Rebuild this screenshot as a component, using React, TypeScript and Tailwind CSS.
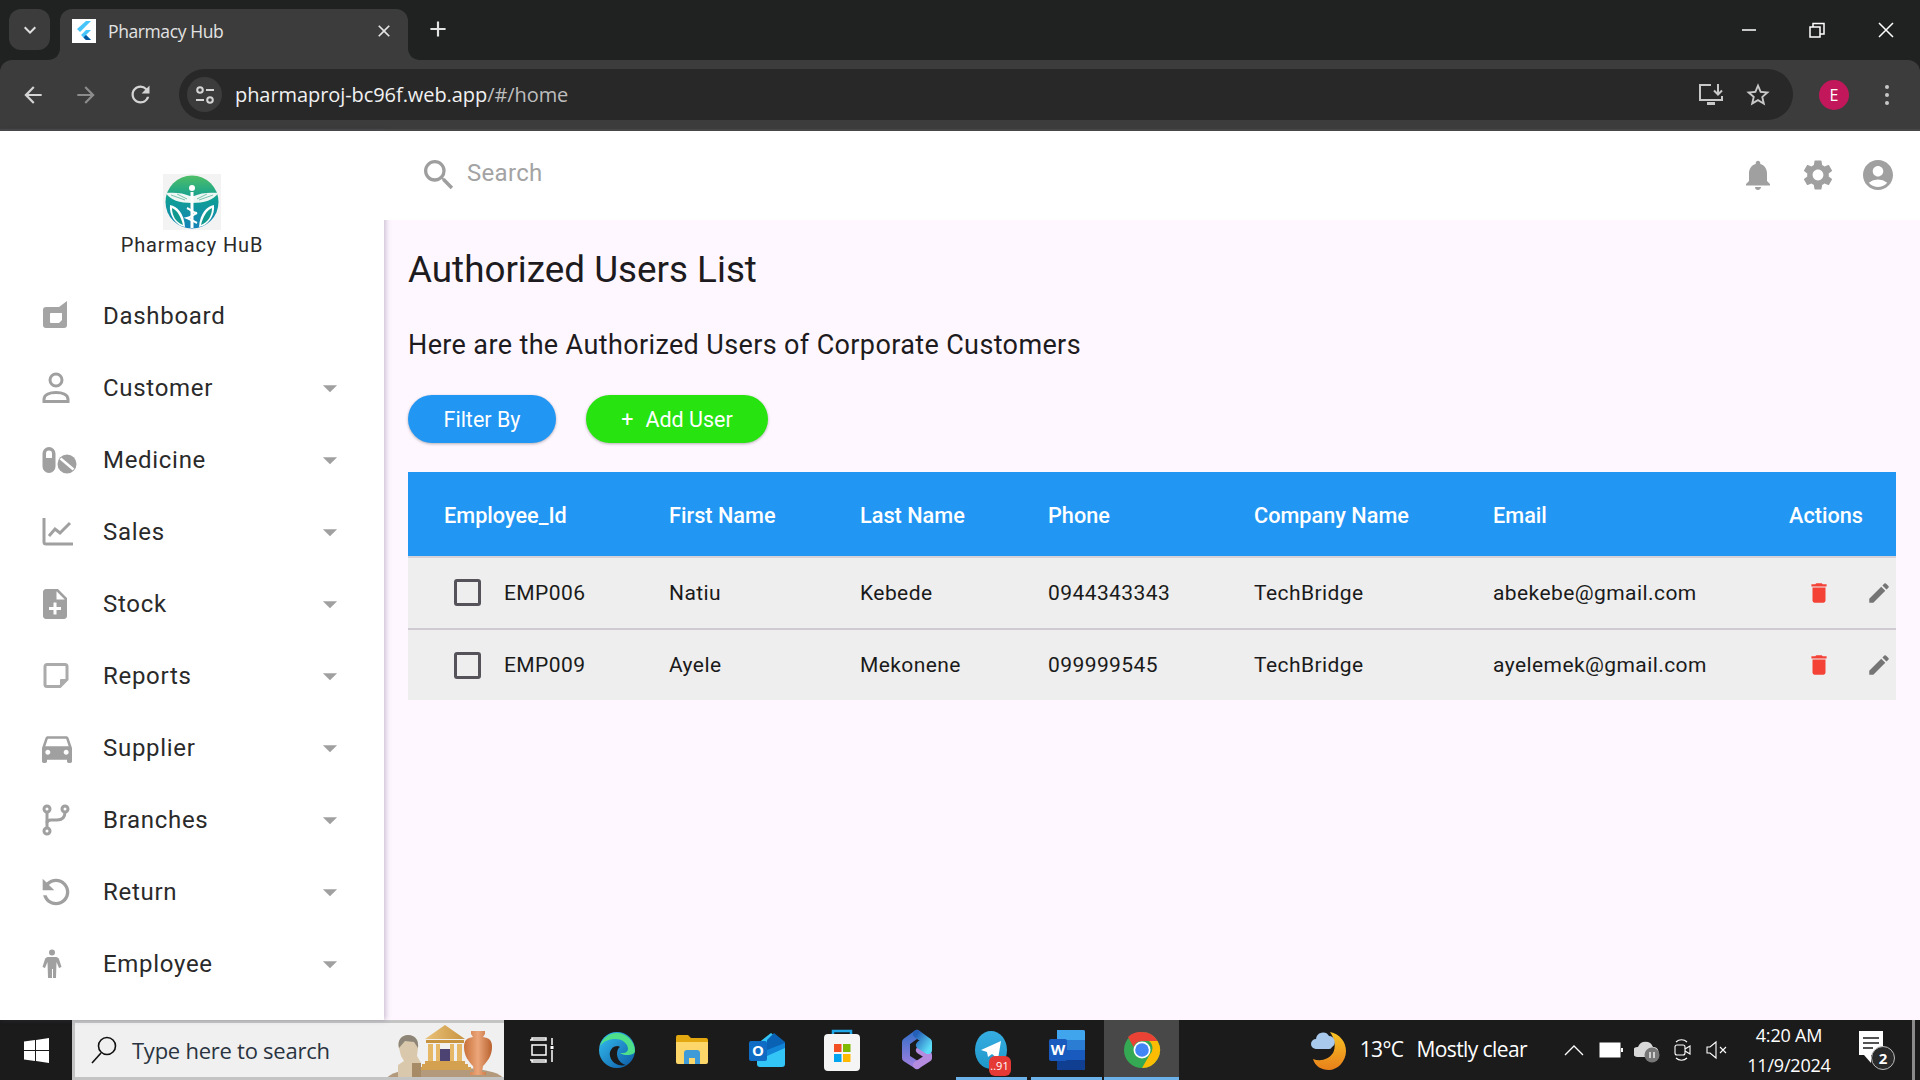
import React from "react";
import {
  MdArrowBack,
  MdArrowForward,
  MdRefresh,
  MdStarBorder,
  MdSearch,
  MdNotifications,
  MdSettings,
  MdAccountCircle,
  MdArrowDropDown,
  MdDelete,
  MdEdit,
  MdDirectionsCar,
  MdNoteAdd,
  MdClose,
  MdAdd,
  MdKeyboardArrowDown,
} from "react-icons/md";

const DashboardIcon = () => (
  <svg width="26" height="30" viewBox="0 0 26 30" fill="#a4a4a4">
    <path
      fillRule="evenodd"
      d="M4 6h13l8-6v24a3 3 0 0 1-3 3H4a3 3 0 0 1-3-3V9a3 3 0 0 1 3-3zm5 6a1 1 0 0 0-1 1v8a1 1 0 0 0 1 1h8l3-3v-7H9z"
    />
  </svg>
);

const CustomerIcon = () => (
  <svg width="28" height="32" viewBox="0 0 28 32" fill="none" stroke="#a0a0a0" strokeWidth="3">
    <circle cx="14" cy="8" r="6" />
    <path d="M2 29.500v-2c0-5 6-7 12-7s12 2 12 7v2z" />
  </svg>
);

const MedicineIcon = () => (
  <svg width="36" height="28" viewBox="0 0 36 28" fill="#a0a0a0">
    <path
      fillRule="evenodd"
      d="M7 1a6.500 6.500 0 0 1 6.500 6.500v13a6.500 6.500 0 0 1-13 0v-13A6.500 6.500 0 0 1 7 1zM4 12h6V7.500a3 3 0 0 0-6 0z"
    />
    <circle cx="25" cy="18" r="9.500" />
    <path d="M18.500 12.500l13 11" stroke="#fff" strokeWidth="2.500" />
  </svg>
);

const SalesIcon = () => (
  <svg width="32" height="30" viewBox="0 0 32 30" fill="none" stroke="#a0a0a0" strokeWidth="3">
    <path d="M2 1v24a2 2 0 0 0 2 2h27" />
    <path d="M7 19l6-7 5 4 10-10" />
  </svg>
);

const ReportsIcon = () => (
  <svg width="28" height="30" viewBox="0 0 28 30" fill="none" stroke="#ababab" strokeWidth="3">
    <path d="M5 3.500h18a2 2 0 0 1 2 2v13l-7 7H5a2 2 0 0 1-2-2v-18a2 2 0 0 1 2-2z" />
    <path d="M18 26v-7a1 1 0 0 1 1-1h7z" fill="#ababab" stroke="none" />
  </svg>
);

const BranchesIcon = () => (
  <svg width="28" height="32" viewBox="0 0 28 32" fill="none" stroke="#a0a0a0" strokeWidth="3">
    <circle cx="5" cy="5" r="3" />
    <circle cx="5" cy="27" r="3" />
    <circle cx="23" cy="5" r="3" />
    <path d="M5 8v16" />
    <path d="M23 8c0 6-3 8-8 8H9c-2 0-4 1-4 3" />
  </svg>
);

const EmployeeIcon = () => (
  <svg width="20" height="30" viewBox="0 0 20 30" fill="#a0a0a0">
    <circle cx="10" cy="3.500" r="3" />
    <path d="M6 8h8c1.500 0 2.500 1 3 2l2.500 8-2.500 1-2.500-6-.5 16h-3v-9h-1v9H6l-.5-16-2.500 6-2.500-1 2.500-8c.5-1 1.500-2 3-2z" />
  </svg>
);

const Logo = () => (
  <svg width="58" height="56" viewBox="0 0 58 56" className="bg-[#f3f3f3]">
    <defs>
      <linearGradient id="logoGrad" x1="0" y1="0" x2="0" y2="1">
        <stop offset="0" stopColor="#4fbf67" />
        <stop offset="0.45" stopColor="#0f9e95" />
        <stop offset="1" stopColor="#1382b8" />
      </linearGradient>
    </defs>
    <circle cx="29" cy="28" r="26.500" fill="url(#logoGrad)" />
    <path d="M3 19c8-1 18 0 24 3h4c6-3 15-4 24-3-4 7-14 10-26 10S7 26 3 19z" fill="#eef7f3" />
    <path d="M8 21l14 5M14 20l10 5M50 21l-14 5M44 20l-10 5" stroke="#7cc4b0" strokeWidth="1" />
    <circle cx="29" cy="14" r="3" fill="#fff" />
    <path d="M7 31c7 1 14 8 15 22C12 51 6 41 7 31z" fill="#fff" />
    <path d="M51 31c-7 1-14 8-15 22 10-2 16-12 15-22z" fill="#fff" />
    <path d="M9 34c6 3 9 9 11 17-7-3-11-9-11-17zM49 34c-6 3-9 9-11 17 7-3 11-9 11-17z" fill="#11998f" />
    <path d="M29 18v36" stroke="#fff" strokeWidth="3" />
    <path d="M24 34c6 3 6 5 10 5-5 2-5 4-10 5 5 2 6 3 10 5" fill="none" stroke="#fff" strokeWidth="2" />
  </svg>
);

const Favicon = () => (
  <div className="w-6 h-[24px] bg-white flex items-center justify-center">
    <svg width="16" height="20" viewBox="0 0 16 20">
      <path d="M10 0h5L4 11 1 8z" fill="#47c5fb" />
      <path d="M10 9h5l-5 5 5 5h-5l-5-5z" fill="#47c5fb" />
      <path d="M7.500 16.500L10 14l5 5h-5z" fill="#00569e" />
    </svg>
  </div>
);

const TuneIcon = () => (
  <svg width="22" height="22" viewBox="0 0 22 22" fill="none" stroke="#d5d5d5" strokeWidth="2">
    <circle cx="6" cy="6" r="2.800" />
    <path d="M12 6h8" />
    <circle cx="16" cy="16" r="2.800" />
    <path d="M2 16h8" />
  </svg>
);

const InstallIcon = () => (
  <svg width="26" height="24" viewBox="0 0 26 24" fill="none" stroke="#c8c8c8" strokeWidth="2">
    <path d="M13 2H2v15h22v-4" />
    <path d="M20 1v10M16 7.500l4 4 4-4" />
    <path d="M9 20.500h8" strokeWidth="3" />
  </svg>
);

const WindowControls = () => (
  <div className="flex items-center h-full">
    <div className="w-[68px] flex justify-center">
      <svg width="16" height="16" viewBox="0 0 16 16" stroke="#fff" strokeWidth="1.500"><path d="M1 8h14" /></svg>
    </div>
    <div className="w-[68px] flex justify-center">
      <svg width="16" height="16" viewBox="0 0 16 16" fill="none" stroke="#fff" strokeWidth="1.500">
        <path d="M1 5h10v10H1z" />
        <path d="M4 5V1.500h11V12h-4" />
      </svg>
    </div>
    <div className="w-[69px] flex justify-center">
      <svg width="16" height="16" viewBox="0 0 16 16" stroke="#fff" strokeWidth="1.500"><path d="M1 1l14 14M15 1L1 15" /></svg>
    </div>
  </div>
);

const BrowserChrome = () => (
  <div className="bg-[#202221] font-['Open_Sans',sans-serif]">
    <div className="h-[60px] flex items-end pl-[9px]">
      <div className="w-[41px] h-[41px] mb-[10px] rounded-xl bg-[#3c3c3c] flex items-center justify-center text-[#e0e0e0]">
        <MdKeyboardArrowDown size={24} />
      </div>
      <div className="relative ml-[10px] w-[348px] h-[51px] bg-[#3c3c3c] rounded-t-xl flex items-center pl-[12px] pr-[14px] pb-[7px]">
        <svg className="absolute -left-[12px] bottom-0" width="12" height="12" viewBox="0 0 12 12" fill="#3c3c3c">
          <path d="M12 0v12H0c7 0 12-5 12-12z" />
        </svg>
        <svg className="absolute -right-[12px] bottom-0" width="12" height="12" viewBox="0 0 12 12" fill="#3c3c3c">
          <path d="M0 0v12h12C5 12 0 7 0 0z" />
        </svg>
        <Favicon />
        <span className="ml-3 text-[#e3e3e3] text-[17.500px] tracking-[-0.4px]">Pharmacy Hub</span>
        <MdClose size={20} className="ml-auto text-[#e3e3e3]" />
      </div>
      <MdAdd size={26} className="ml-[17px] mb-[18px] text-[#e3e3e3]" />
      <div className="flex-1" />
      <WindowControls />
    </div>
    <div className="h-[71px] bg-[#3c3c3c] rounded-t-xl border-b-2 border-[#474747] flex items-center pl-[20px] pr-[20px]">
      <MdArrowBack size={26} className="text-[#d4d4d4]" />
      <MdArrowForward size={26} className="ml-[27px] text-[#8c8c8c]" />
      <MdRefresh size={27} className="ml-[28px] text-[#d4d4d4]" />
      <div className="ml-[25px] h-[51px] w-[1614px] rounded-full bg-[#282828] flex items-center pl-[8px] pr-[21px]">
        <div className="w-[35px] h-[35px] rounded-full bg-[#3c3c3c] flex items-center justify-center">
          <TuneIcon />
        </div>
        <span className="ml-[13px] text-[20px] tracking-[-0.07px] text-[#f1f1f1]">
          pharmaproj-bc96f.web.app<span className="text-[#bdbdbd]">/#/home</span>
        </span>
        <div className="ml-auto flex items-center gap-[20px]">
          <InstallIcon />
          <MdStarBorder size={28} className="text-[#c8c8c8]" />
        </div>
      </div>
      <div className="ml-[26px] w-[30px] h-[30px] rounded-full bg-[#c2185b] text-white text-[16px] flex items-center justify-center">
        E
      </div>
      <div className="ml-[36px] flex flex-col gap-[4px]">
        <div className="w-[4px] h-[4px] rounded-full bg-[#c8c8c8]" />
        <div className="w-[4px] h-[4px] rounded-full bg-[#c8c8c8]" />
        <div className="w-[4px] h-[4px] rounded-full bg-[#c8c8c8]" />
      </div>
    </div>
  </div>
);

const navItems: { label: string; icon: React.ReactNode; arrow: boolean }[] = [
  { label: "Dashboard", icon: <DashboardIcon />, arrow: false },
  { label: "Customer", icon: <CustomerIcon />, arrow: true },
  { label: "Medicine", icon: <MedicineIcon />, arrow: true },
  { label: "Sales", icon: <SalesIcon />, arrow: true },
  { label: "Stock", icon: <MdNoteAdd size={36} className="-ml-[5px] text-[#a0a0a0]" />, arrow: true },
  { label: "Reports", icon: <ReportsIcon />, arrow: true },
  { label: "Supplier", icon: <MdDirectionsCar size={40} className="-ml-[5px] text-[#a0a0a0]" />, arrow: true },
  { label: "Branches", icon: <BranchesIcon />, arrow: true },
  { label: "Return", icon: <MdRefresh size={40} className="-ml-[6px] -scale-x-100 text-[#a0a0a0]" />, arrow: true },
  { label: "Employee", icon: <EmployeeIcon />, arrow: true },
];

const Sidebar = () => (
  <div className="relative z-10 w-[384px] bg-white shadow-[2px_0_5px_rgba(90,70,110,0.3)] font-['Roboto',sans-serif]">
    <div className="h-[149px] pt-[43px] flex flex-col items-center">
      <Logo />
      <div className="text-[20px] leading-[30px] tracking-[0.85px] text-[#2a2a2a]">Pharmacy HuB</div>
    </div>
    {navItems.map((item) => (
      <div key={item.label} className="h-[72px] flex items-center pl-[42px]">
        <div className="w-[61px] flex items-center">{item.icon}</div>
        <span className="text-[24px] tracking-[0.7px] text-[#2a2a2a]">{item.label}</span>
        {item.arrow && <MdArrowDropDown size={34} className="ml-auto mr-[37px] text-[#a0a0a0]" />}
      </div>
    ))}
  </div>
);

const rows = [
  { id: "EMP006", first: "Natiu", last: "Kebede", phone: "0944343343", company: "TechBridge", email: "abekebe@gmail.com" },
  { id: "EMP009", first: "Ayele", last: "Mekonene", phone: "099999545", company: "TechBridge", email: "ayelemek@gmail.com" },
];

const Content = () => (
  <div className="flex-1 flex flex-col font-['Roboto',sans-serif]">
    <div className="relative z-20 h-[89px] bg-white flex items-center pl-[35px] pr-[24px] pb-[2px]">
      <MdSearch size={40} className="text-[#9e9e9e]" />
      <span className="ml-[8px] text-[24px] tracking-[0.3px] text-[#a3a3a3] -mt-[3px]">Search</span>
      <div className="ml-auto flex items-center gap-[24px]">
        <MdNotifications size={36} className="text-[#a0a0a0]" />
        <MdSettings size={36} className="text-[#a0a0a0]" />
        <MdAccountCircle size={36} className="text-[#a0a0a0]" />
      </div>
    </div>
    <div className="flex-1 bg-[#fef7ff] pl-[24px] pr-[24px]">
      <h1 className="mt-[27px] text-[36.800px] leading-[46px] text-[#1d1b20]">Authorized Users List</h1>
      <p className="mt-[32px] text-[27px] leading-[40px] tracking-[0.37px] text-[#1d1b20]">
        Here are the Authorized Users of Corporate Customers
      </p>
      <div className="mt-[30px] flex gap-[30px]">
        <button className="w-[148px] h-[48px] pt-[2px] rounded-full bg-[#2196f3] text-white text-[21.500px] shadow-[0_1px_3px_rgba(0,0,0,0.3)]">
          Filter By
        </button>
        <button className="w-[182px] h-[48px] pt-[2px] rounded-full bg-[#27e30f] text-white text-[21.500px] shadow-[0_1px_3px_rgba(0,0,0,0.3)] flex items-center justify-center gap-[12px]">
          <span>+</span>
          <span>Add User</span>
        </button>
      </div>
      <div className="mt-[29px]">
        <div className="h-[86px] pt-[5px] bg-[#2196f3] border-b-2 border-[#d6d2d8] grid grid-cols-[225px_191px_188px_206px_239px_296px_107px] items-center pl-[36px] text-white text-[21.700px] font-medium">
          <span>Employee_Id</span>
          <span>First Name</span>
          <span>Last Name</span>
          <span>Phone</span>
          <span>Company Name</span>
          <span>Email</span>
          <span>Actions</span>
        </div>
        {rows.map((row, idx) => (
          <div
            key={row.id}
            className={`bg-[#eeeeee] grid grid-cols-[225px_191px_188px_206px_239px_296px_107px] items-center pl-[36px] text-[21px] tracking-[0.42px] text-[#1a1a1a] ${idx === 0 ? "h-[72px] pt-[1px] border-b-2 border-[#cfc9d2]" : "h-[70px] pt-[2px]"}`}
          >
            <div className="flex items-center">
              <div className="ml-[10px] -mt-[2px] w-[27px] h-[27px] rounded-[3px] border-[3px] border-[#55525a]" />
              <span className="ml-[23px]">{row.id}</span>
            </div>
            <span>{row.first}</span>
            <span>{row.last}</span>
            <span>{row.phone}</span>
            <span>{row.company}</span>
            <span>{row.email}</span>
            <div className="flex items-center justify-end pr-[4px] -mt-[2px]">
              <MdDelete size={26} className="text-[#f44336]" />
              <MdEdit size={26} className="ml-[34px] text-[#757575]" />
            </div>
          </div>
        ))}
      </div>
    </div>
  </div>
);

const Doodle = () => (
  <svg width="117" height="54" viewBox="0 0 117 54">
    <defs>
      <linearGradient id="vase" x1="0" y1="0" x2="1" y2="0">
        <stop offset="0" stopColor="#c9713a" />
        <stop offset="0.5" stopColor="#eba67a" />
        <stop offset="1" stopColor="#b9612d" />
      </linearGradient>
      <linearGradient id="roof" x1="0" y1="0" x2="1" y2="0">
        <stop offset="0" stopColor="#eac27a" />
        <stop offset="1" stopColor="#c8933f" />
      </linearGradient>
    </defs>
    <ellipse cx="58" cy="56" rx="58" ry="12" fill="#b39a7c" />
    <path d="M38 16L58 2l20 14z" fill="url(#roof)" />
    <path d="M39 17h38v3H39z" fill="#c8933f" />
    <path d="M41 21h5v17h-5zM49 21h4v17h-4zM63 21h4v17h-4zM70 21h5v17h-5z" fill="#e6b765" />
    <path d="M53 26h10v12H53z" fill="#4d4372" />
    <path d="M38 38h40v3H38zM35 41h46v3H35zM32 44h52v3H32z" fill="#d3a150" />
    <path
      d="M84 8h14v3l-2 3c6 1 9 3 9 10 0 9-5 15-9 19l-1 6h4v3H83v-3h4l-1-6c-4-4-9-10-9-19 0-7 3-9 9-10l-2-3z"
      fill="url(#vase)"
    />
    <path d="M12 25c-2-8 3-13 9-13 7 0 11 5 10 13l-1 8 4 7v14H11V42l6-4-3-5z" fill="#d9c8ab" />
    <path d="M12 25c-2-8 3-13 9-13 7 0 11 5 10 13l-4-6-9-1z" fill="#8d8678" />
    <path d="M25 40l9 0v14h-9z" fill="#a78a66" />
  </svg>
);

const slot = "w-[75px] h-full flex items-center justify-center relative";

const WindowsLogo = () => (
  <svg width="25" height="25" viewBox="0 0 25 25" fill="#fff">
    <path d="M0 3.500l11-1.500v10H0zM12 1.900L25 0v12H12zM0 13h11v10L0 21.500zM12 13h13v12l-13-1.900z" />
  </svg>
);

const TaskViewIcon = () => (
  <svg width="26" height="26" viewBox="0 0 26 26" fill="none" stroke="#fff" strokeWidth="1.500">
    <path d="M1 3h2V1h14v2h-14M3 8h14v10H3zM1 23h2v2h14v-2h-14M23 1v7M23 13v12" />
    <rect x="21.500" y="9" width="3" height="3" fill="#fff" stroke="none" />
  </svg>
);

const EdgeIcon = () => (
  <svg width="38" height="38" viewBox="0 0 38 38">
    <defs>
      <linearGradient id="edgeA" x1="0" y1="0" x2="1" y2="1">
        <stop offset="0" stopColor="#35c1f1" />
        <stop offset="1" stopColor="#0c59a4" />
      </linearGradient>
    </defs>
    <circle cx="19" cy="19" r="18" fill="url(#edgeA)" />
    <path d="M37 20c0-10-9-18-18-18C11 2 4 8 2 15c4-5 9-7 15-7 8 0 13 5 13 10 0 2-2 4-5 4h-3c3 3 15 3 15-2z" fill="#4ee08a" />
    <path d="M20 15c-6 0-9 5-8 10 1 6 8 11 16 9-5-1-9-6-9-11 0-3 1-6 3-7z" fill="#1b1b1b" />
  </svg>
);

const ExplorerIcon = () => (
  <svg width="32" height="32" viewBox="0 0 32 32">
    <path d="M0 3a2 2 0 0 1 2-2h10l3 3h15a2 2 0 0 1 2 2v22H0z" fill="#e3a70f" />
    <path d="M0 8h32v20a2 2 0 0 1-2 2H2a2 2 0 0 1-2-2z" fill="#fcd669" />
    <path d="M8 30V19a3 3 0 0 1 3-3h10a3 3 0 0 1 3 3v11h-5v-6h-6v6z" fill="#3f9ad8" />
  </svg>
);

const OutlookIcon = () => (
  <svg width="36" height="36" viewBox="0 0 36 36">
    <path d="M8 12l14-11 14 11v20a3 3 0 0 1-3 3H11a3 3 0 0 1-3-3z" fill="#33c5f5" />
    <path d="M18 8l7-7 11 9v4L18 22z" fill="#0a62b5" />
    <path d="M36 11v5L18 24v-6z" fill="#1284d8" />
    <rect x="0" y="9" width="18" height="20" rx="2" fill="#0f6cc4" />
    <text x="9" y="24" textAnchor="middle" fontSize="15" fontWeight="700" fill="#fff" fontFamily="Open Sans, sans-serif">O</text>
  </svg>
);

const StoreIcon = () => (
  <svg width="36" height="42" viewBox="0 0 36 42">
    <path d="M9 6V2h18v4" fill="none" stroke="#1fa7e6" strokeWidth="2.500" />
    <rect x="0" y="5" width="36" height="37" rx="4" fill="#f5f5f5" />
    <rect x="10" y="15" width="7.500" height="8" fill="#f25022" />
    <rect x="19" y="15" width="7.500" height="8" fill="#7fba00" />
    <rect x="10" y="25" width="7.500" height="8" fill="#00a4ef" />
    <rect x="19" y="25" width="7.500" height="8" fill="#ffb900" />
  </svg>
);

const M365Icon = () => (
  <svg width="32" height="42" viewBox="0 0 32 42" fill="none" strokeWidth="8" strokeLinecap="round" strokeLinejoin="round">
    <defs>
      <linearGradient id="m365a" x1="0" y1="0" x2="0" y2="1">
        <stop offset="0" stopColor="#3b6fc9" />
        <stop offset="1" stopColor="#9a7fe0" />
      </linearGradient>
      <linearGradient id="m365b" x1="0" y1="0" x2="1" y2="1">
        <stop offset="0" stopColor="#2560b8" />
        <stop offset="1" stopColor="#5cdcf7" />
      </linearGradient>
    </defs>
    <path d="M16 36L5 29V13l11-8" stroke="url(#m365a)" />
    <path d="M16 36l11-7v-3l-8-5" stroke="#b58be0" />
    <path d="M16 5l11 8v8l-8-5" stroke="url(#m365b)" />
  </svg>
);

const TelegramIcon = () => (
  <div className="relative w-[34px] h-[38px]">
    <svg width="34" height="38" viewBox="0 0 34 38">
      <defs>
        <linearGradient id="tg" x1="0" y1="0" x2="0" y2="1">
          <stop offset="0" stopColor="#37aee2" />
          <stop offset="1" stopColor="#1e96c8" />
        </linearGradient>
      </defs>
      <ellipse cx="16" cy="19" rx="16" ry="19" fill="url(#tg)" />
      <path d="M6 19l20-9-3 18-6-5-4 3-1-5z" fill="#fff" />
    </svg>
    <div className="absolute left-[14px] top-[25px] w-[22px] h-[20px] rounded-md bg-[#e53935] text-white text-[11px] leading-[20px] text-center">
      ..91
    </div>
  </div>
);

const WordIcon = () => (
  <svg width="36" height="40" viewBox="0 0 36 40">
    <rect x="8" y="0" width="28" height="40" rx="2" fill="#2b7cd3" />
    <rect x="8" y="10" width="28" height="10" fill="#2b7cd3" />
    <rect x="8" y="20" width="28" height="10" fill="#185abd" />
    <path d="M8 30h28v8a2 2 0 0 1-2 2H10a2 2 0 0 1-2-2z" fill="#103f91" />
    <path d="M8 0h26a2 2 0 0 1 2 2v8H8z" fill="#41a5ee" />
    <rect x="0" y="9" width="18" height="22" rx="2" fill="#185abd" />
    <text x="9" y="25" textAnchor="middle" fontSize="15" fontWeight="700" fill="#fff" fontFamily="Open Sans, sans-serif">W</text>
  </svg>
);

const ChromeIcon = () => (
  <svg width="38" height="38" viewBox="0 0 38 38">
    <circle cx="19" cy="19" r="18" fill="#34a853" />
    <path d="M19 1a18 18 0 0 1 15.600 9H19a9 9 0 0 0-8.500 6L5 6a18 18 0 0 1 14-5z" fill="#ea4335" />
    <path d="M34.600 10A18 18 0 0 1 19 37l7.800-13.500A9 9 0 0 0 26 10z" fill="#fbbc04" />
    <circle cx="19" cy="19" r="8.500" fill="#fff" />
    <circle cx="19" cy="19" r="6.800" fill="#4285f4" />
  </svg>
);

const WeatherIcon = () => (
  <svg width="36" height="42" viewBox="0 0 36 42">
    <defs>
      <linearGradient id="moon" x1="0" y1="0" x2="0" y2="1">
        <stop offset="0" stopColor="#f7c325" />
        <stop offset="1" stopColor="#e8801a" />
      </linearGradient>
    </defs>
    <path d="M20 3c10 2 16 10 16 19 0 11-9 19-17 19-8 0-14-4-16-11 8 3 16 0 20-6 3-6 2-14-3-21z" fill="url(#moon)" />
    <path d="M6 20a5 5 0 0 1 0-10 7 7 0 0 1 13-3 6 6 0 0 1 3 11 3 3 0 0 1-3 2z" fill="#a8c9ec" />
  </svg>
);

const Tray = () => (
  <div className="flex items-center h-full text-white">
    <WeatherIcon />
    <span className="ml-[14px] text-[21px] tracking-[-0.6px]">13°C</span>
    <span className="ml-[13px] text-[21px] tracking-[-0.6px]">Mostly clear</span>
    <svg className="ml-[37px]" width="20" height="12" viewBox="0 0 20 12" fill="none" stroke="#fff" strokeWidth="1.300">
      <path d="M1 11l9-9 9 9" />
    </svg>
    <svg className="ml-[15px]" width="24" height="16" viewBox="0 0 24 16">
      <rect x="1" y="1" width="20" height="14" fill="#fff" stroke="#fff" />
      <rect x="22" y="6" width="2" height="4" fill="#fff" />
    </svg>
    <svg className="ml-[11px]" width="26" height="26" viewBox="0 0 26 26">
      <path d="M3 20a5 5 0 0 1 1-10 8 8 0 0 1 15 0 5 5 0 0 1 1 10z" fill="#d8d8d8" />
      <circle cx="18" cy="18" r="7.500" fill="#777" />
      <path d="M16 15v6M20 15v6" stroke="#fff" strokeWidth="1.300" />
    </svg>
    <svg className="ml-[13px]" width="18" height="26" viewBox="0 0 18 26" fill="none" stroke="#fff" strokeWidth="1.100">
      <path d="M3 5c3-3 8-3 11 0M3 21c3 3 8 3 11 0" />
      <rect x="2" y="8" width="10" height="10" rx="2" />
      <path d="M12 12l5-3v8l-5-3" />
    </svg>
    <svg className="ml-[15px]" width="22" height="20" viewBox="0 0 22 20" fill="none" stroke="#fff" strokeWidth="1.100">
      <path d="M1 7h3l6-5v16l-6-5H1z" />
      <path d="M14 7l6 6M20 7l-6 6" />
    </svg>
    <div className="ml-[11px] w-[100px] flex flex-col items-center text-[18px] leading-[30px] tracking-[-0.2px]">
      <span>4:20 AM</span>
      <span>11/9/2024</span>
    </div>
    <div className="relative ml-[19px] w-[34px] h-[40px]">
      <svg width="26" height="36" viewBox="0 0 26 36" fill="#fff">
        <path d="M1 1h24v24H13v8l-7-8H1z" />
        <path d="M5 8h16M5 13h16M5 18h10" stroke="#1b1b1b" strokeWidth="1.300" />
      </svg>
      <div className="absolute left-[13px] top-[16px] w-[24px] h-[24px] rounded-full bg-[#2a2a2a] border border-[#bdbdbd] text-[15px] font-bold leading-[22px] text-center">
        2
      </div>
    </div>
    <div className="ml-[20px] w-[3px] h-full bg-[#8a8a8a]" />
    <div className="w-[5px]" />
  </div>
);

const Taskbar = () => (
  <div className="h-[60px] bg-[#1b1b1b] flex items-center font-['Open_Sans',sans-serif]">
    <div className="w-[72px] flex justify-center">
      <WindowsLogo />
    </div>
    <div className="w-[432px] h-full bg-[#f0f0f0] border-[3px] border-[#c4c4c4] border-r-0 flex items-center pl-[16px] overflow-hidden">
      <svg width="26" height="28" viewBox="0 0 26 28" fill="none" stroke="#111" strokeWidth="1.600">
        <circle cx="16" cy="10" r="8.500" />
        <path d="M10 17L1 27" />
      </svg>
      <span className="ml-[15px] text-[22px] tracking-[-0.25px] text-[#2a3340]">Type here to search</span>
      <div className="ml-auto">
        <Doodle />
      </div>
    </div>
    <div className={slot}><TaskViewIcon /></div>
    <div className={slot}><EdgeIcon /></div>
    <div className={slot}><ExplorerIcon /></div>
    <div className={slot}><OutlookIcon /></div>
    <div className={slot}><StoreIcon /></div>
    <div className={slot}><M365Icon /></div>
    <div className={slot}>
      <TelegramIcon />
      <div className="absolute bottom-0 left-[2px] right-[2px] h-[3px] bg-[#6cb2e8]" />
    </div>
    <div className={slot}>
      <WordIcon />
      <div className="absolute bottom-0 left-[2px] right-[2px] h-[3px] bg-[#6cb2e8]" />
    </div>
    <div className={`${slot} bg-[#484848]`}>
      <ChromeIcon />
      <div className="absolute bottom-0 left-0 right-0 h-[3px] bg-[#6cb2e8]" />
    </div>
    <div className="flex-1" />
    <Tray />
  </div>
);

const App = () => {
  return (
    <div className="w-[1920px] h-[1080px] flex flex-col overflow-hidden">
      <BrowserChrome />
      <div className="flex-1 flex min-h-0">
        <Sidebar />
        <Content />
      </div>
      <Taskbar />
    </div>
  );
};

export default App;
